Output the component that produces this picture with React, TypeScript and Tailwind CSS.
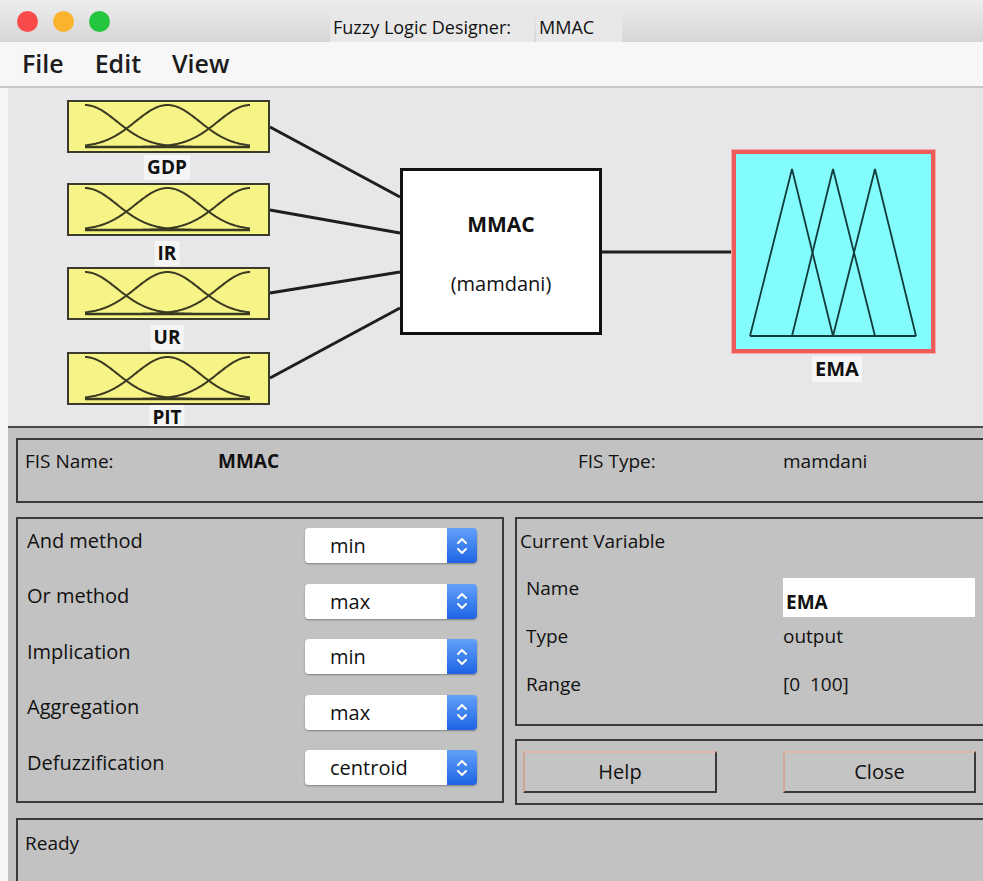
import React from "react";

// gaussian membership curve inside a 203x53 input box
const bell = (c: number) => {
  const pts: string[] = [];
  for (let x = 18; x <= 183; x += 1.5) {
    const y = 47 - 42 * Math.exp(-((x - c) * (x - c)) / (2 * 32 * 32));
    pts.push(`${x.toFixed(1)},${y.toFixed(1)}`);
  }
  return "M" + pts.join(" L");
};

function InputVar({ top, label, labelTop }: { top: number; label: string; labelTop: number }) {
  return (
    <>
      <div
        className="absolute left-[59px] h-[53px] w-[203px] border-2 border-[#3b3b2c] bg-[#f7f487]"
        style={{ top }}
      >
        <svg width="199" height="49" viewBox="2 2 199 49" className="block">
          <path d={bell(18)} stroke="#3a3a22" strokeWidth="2" fill="none" />
          <path d={bell(100.5)} stroke="#3a3a22" strokeWidth="2" fill="none" />
          <path d={bell(183)} stroke="#3a3a22" strokeWidth="2" fill="none" />
          <line x1="18" y1="47" x2="183" y2="47" stroke="#3a3a22" strokeWidth="2.5" />
        </svg>
      </div>
      <div
        className="absolute left-[159px] h-[25px] -translate-x-1/2 bg-[#f5f5f5] px-[3px] text-[19px] font-bold leading-[25px] text-[#111]"
        style={{ top: labelTop }}
      >
        {label}
      </div>
    </>
  );
}

function Select({ value }: { value: string }) {
  return (
    <div className="flex h-[35px] w-[172px] overflow-hidden rounded-[4px] shadow-[0_1px_2px_rgba(0,0,0,0.35)]">
      <div className="flex-1 bg-white pl-[25px] text-[20px] leading-[35px] text-[#111]">{value}</div>
      <div className="flex w-[30px] items-center justify-center bg-linear-to-b from-[#62a0f8] to-[#1d63e4]">
        <svg width="12" height="22" viewBox="0 0 12 22">
          <path
            d="M2 8 L6 4 L10 8 M2 14 L6 18 L10 14"
            stroke="white"
            strokeWidth="2"
            fill="none"
            strokeLinecap="round"
            strokeLinejoin="round"
          />
        </svg>
      </div>
    </div>
  );
}

const methods = [
  ["And method", "min"],
  ["Or method", "max"],
  ["Implication", "min"],
  ["Aggregation", "max"],
  ["Defuzzification", "centroid"],
];

export default function App() {
  return (
    <div className="h-[881px] w-[983px] overflow-hidden bg-white font-['Open_Sans',sans-serif] text-[#111]">
      {/* title bar */}
      <div className="flex h-[42px] bg-linear-to-b from-[#ededed] to-[#d6d6d6]">
        <div className="flex w-[330px] items-center gap-[15px] pl-[17px]">
          <span className="h-[21px] w-[21px] rounded-full bg-[#fb4a4a]" />
          <span className="h-[21px] w-[21px] rounded-full bg-[#f9b32f]" />
          <span className="h-[21px] w-[21px] rounded-full bg-[#24c63f]" />
        </div>
        <div className="mt-auto h-[30px] w-[204px] bg-[#e8e8e8] pl-[3px] text-[18px] leading-[30px]">
          Fuzzy Logic Designer:
        </div>
        <div className="ml-[2px] mt-auto h-[30px] w-[86px] bg-[#e8e8e8] pl-[3px] text-[18px] leading-[30px]">
          MMAC
        </div>
      </div>

      {/* menu bar */}
      <div className="flex h-[46px] items-center gap-[31px] border-b-2 border-[#c6c6c6] bg-[#f7f7f7] pl-[22px] text-[25px] font-semibold text-[#1c1c1c]">
        <span>File</span>
        <span>Edit</span>
        <span>View</span>
      </div>

      <div className="flex">
        <div className="w-[8px] bg-[#f6f6f6]" />
        <div className="flex h-[793px] flex-1 flex-col overflow-hidden bg-[#c2c2c2]">
          {/* diagram */}
          <div className="relative h-[340px] shrink-0 overflow-hidden border-b-2 border-[#484848] bg-[#e7e7e9]">
            <svg width="975" height="340" className="absolute left-0 top-0">
              <g stroke="#1e1e1e" strokeWidth="3">
                <line x1="262" y1="39" x2="392" y2="109" />
                <line x1="262" y1="122" x2="392" y2="145" />
                <line x1="262" y1="205" x2="392" y2="184" />
                <line x1="262" y1="290" x2="392" y2="220" />
                <line x1="594" y1="164" x2="724" y2="164" />
              </g>
            </svg>

            <InputVar top={12} label="GDP" labelTop={67} />
            <InputVar top={95} label="IR" labelTop={153} />
            <InputVar top={179} label="UR" labelTop={237} />
            <InputVar top={264} label="PIT" labelTop={317} />

            <div className="absolute left-[392px] top-[80px] flex h-[167px] w-[202px] flex-col items-center border-[3px] border-[#111] bg-white">
              <div className="mt-[38px] text-[21px] font-bold leading-[30px]">MMAC</div>
              <div className="mt-[30px] text-[20px] leading-[30px]">(mamdani)</div>
            </div>

            <div className="absolute left-[724px] top-[62px] h-[203px] w-[203px] border-4 border-[#ee5b5b] bg-[#82fcfc] shadow-[0_0_0_1px_#f6a9a9]">
              <svg width="195" height="195" viewBox="4 4 195 195" className="block">
                <g stroke="#123c3c" strokeWidth="1.8" fill="none" strokeLinejoin="miter">
                  <polyline points="18,186 60,19 101,186" />
                  <polyline points="60,186 101,19 143,186" />
                  <polyline points="101,186 143,19 184,186" />
                  <line x1="18" y1="186" x2="184" y2="186" />
                </g>
              </svg>
            </div>
            <div className="absolute left-[804px] top-[268px] h-[26px] w-[50px] bg-[#f6f6f6] text-center text-[20px] font-bold leading-[26px]">
              EMA
            </div>
          </div>

          <div className="flex shrink-0 flex-col pl-[8px]">
            {/* FIS name row */}
            <div className="mt-[10px] flex h-[65px] border-2 border-r-0 border-[#3a3a3a] pl-[7px] pt-[7px] text-[19px] leading-[28px]">
              <span className="w-[193px]">FIS Name:</span>
              <span className="w-[360px] font-bold">MMAC</span>
              <span className="w-[205px]">FIS Type:</span>
              <span>mamdani</span>
            </div>

            <div className="mt-[14px] flex gap-[11px]">
              {/* methods */}
              <div className="flex h-[286px] w-[488px] flex-col gap-[20.5px] border-2 border-[#3a3a3a] pl-[9px] pt-[9px]">
                {methods.map(([label, value]) => (
                  <div key={label} className="flex h-[35px] items-center">
                    <span className="mb-[10px] w-[278px] text-[20px] leading-[28px]">{label}</span>
                    <Select value={value} />
                  </div>
                ))}
              </div>

              <div className="flex flex-1 flex-col gap-[13px]">
                {/* current variable */}
                <div className="h-[209px] border-2 border-r-0 border-[#3a3a3a] pl-[3px] pt-[8px] text-[19px] leading-[28px]">
                  <div>Current Variable</div>
                  <div className="mt-[23px] flex h-[39px] items-center">
                    <span className="mb-[19px] w-[263px] pl-[6px]">Name</span>
                    <div className="h-[39px] w-[192px] bg-white pl-[3px] pt-[10px] font-bold">EMA</div>
                  </div>
                  <div className="mt-[5px] flex">
                    <span className="w-[263px] pl-[6px]">Type</span>
                    <span>output</span>
                  </div>
                  <div className="mt-[20px] flex">
                    <span className="w-[263px] pl-[6px]">Range</span>
                    <span>[0&nbsp;&nbsp;100]</span>
                  </div>
                </div>

                {/* buttons */}
                <div className="flex h-[66px] items-start border-2 border-r-0 border-[#3a3a3a] pl-[6px] pt-[10px]">
                  <button className="h-[42px] w-[194px] border-2 border-b-[#3a3a3a] border-l-[#cfa593] border-r-[#3a3a3a] border-t-[#ddb5a4] bg-[#c4c4c4] text-[20px]">
                    Help
                  </button>
                  <button className="ml-[66px] h-[42px] w-[193px] border-2 border-b-[#3a3a3a] border-l-[#cfa593] border-r-[#3a3a3a] border-t-[#ddb5a4] bg-[#c4c4c4] text-[20px]">
                    Close
                  </button>
                </div>
              </div>
            </div>

            {/* status */}
            <div className="mt-[13px] h-[80px] border-2 border-r-0 border-[#3a3a3a] pl-[7px] pt-[9px] text-[19px] leading-[28px]">
              Ready
            </div>
          </div>
        </div>
      </div>
    </div>
  );
}
